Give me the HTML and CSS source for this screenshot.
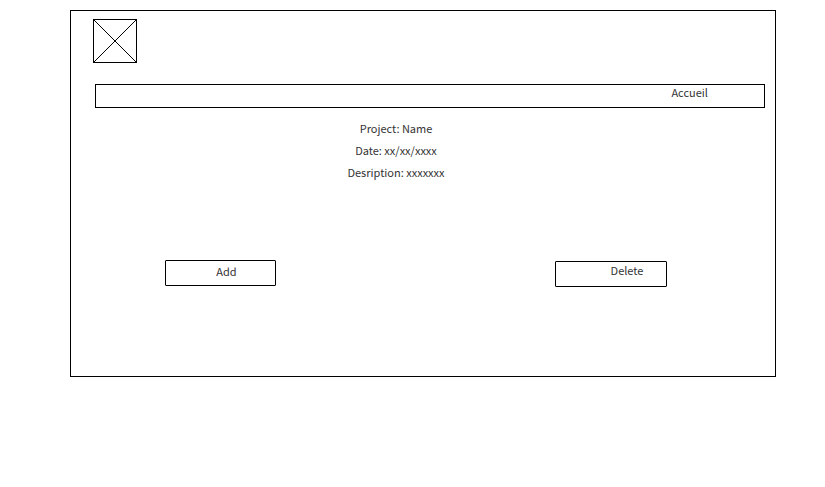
FILE: index.html
```html
<!DOCTYPE html>
<html lang="fr">
<head>
<meta charset="utf-8">
<meta name="viewport" content="width=device-width, initial-scale=1">
<title>Project</title>
<link rel="stylesheet" href="styles.css">
</head>
<body>
<main class="frame">
  <svg class="logo" viewBox="0 0 44 44" role="img" aria-label="Logo">
    <rect x="0.5" y="0.5" width="43" height="43"/>
    <path d="M0.5 0.5 43.5 43.5M43.5 0.5 0.5 43.5"/>
  </svg>
  <nav class="bar"><a href="#">Accueil</a></nav>
  <section class="details">
    <p>Project: Name</p>
    <p>Date: xx/xx/xxxx</p>
    <p>Desription: xxxxxxx</p>
  </section>
  <div class="actions">
    <button type="button" class="add">Add</button>
    <button type="button" class="delete">Delete</button>
  </div>
</main>
</body>
</html>
```
FILE: styles.css
```css
* {
  box-sizing: border-box;
}

body {
  margin: 0;
  padding: 10px 49px 110px 70px;
  background: #fff;
  color: #333;
  font: 11px/22px "Noto Sans CJK SC", "Noto Sans", sans-serif;
}

.frame {
  padding: 8px 10px 89px 24px;
  border: 1px solid #000;
}

.logo {
  display: block;
  width: 44px;
  height: 44px;
  margin-left: -2px;
  fill: none;
  stroke: #000;
  shape-rendering: crispEdges;
}

.bar {
  display: flex;
  justify-content: flex-end;
  height: 24px;
  margin-top: 21px;
  padding-right: 56px;
  border: 1px solid #000;
  line-height: 14px;
}

.bar a {
  color: inherit;
  text-decoration: none;
}

.details {
  margin-top: 9px;
  padding-right: 68px;
  text-align: center;
}

.details p {
  margin: 0;
}

.actions {
  display: flex;
  justify-content: space-between;
  margin-top: 77px;
  padding: 0 98px 0 70px;
}

.actions button {
  height: 26px;
  border: 1px solid #000;
  border-radius: 1px;
  background: #fff;
  color: inherit;
  font: inherit;
  line-height: 16px;
}

.actions .add {
  width: 111px;
  padding: 0 0 4px 12px;
}

.actions .delete {
  width: 112px;
  margin-top: 1px;
  padding: 0 0 8px 32px;
}
```
